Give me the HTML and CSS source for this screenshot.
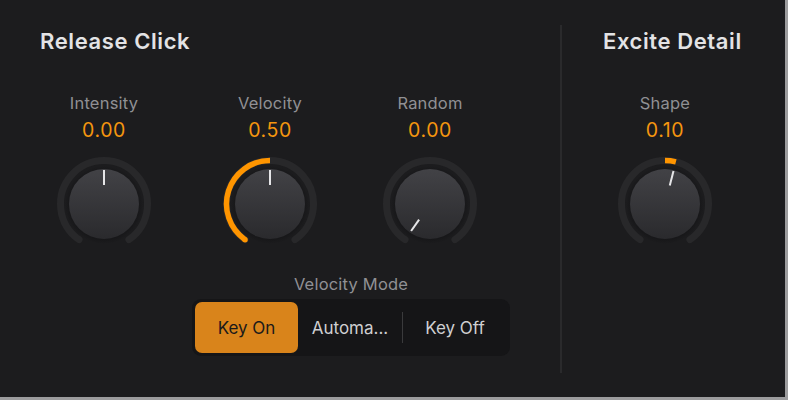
FILE: index.html
```html
<!DOCTYPE html>
<html>
<head>
<meta charset="utf-8">
<link rel="stylesheet" href="styles.css">
</head>
<body>
<div class="panel">
  <section class="group group-left">
    <h2 class="title">Release Click</h2>
    <div class="knobs">
      <div class="knob knob-first">
        <div class="knob-label">Intensity</div>
        <div class="knob-value">0.00</div>
        <svg class="dial" width="100" height="100" viewBox="0 0 100 100">
          <defs>
            <radialGradient id="sh1" cx="50%" cy="50%" r="50%">
              <stop offset="80%" stop-color="#141416"/>
              <stop offset="100%" stop-color="#1c1c1e"/>
            </radialGradient>
            <linearGradient id="disc1" x1="0" y1="0" x2="0" y2="1">
              <stop offset="0" stop-color="#424246"/>
              <stop offset="1" stop-color="#2a2a2d"/>
            </linearGradient>
          </defs>
          <path class="track" d="M25.05 85.63 A43.5 43.5 0 1 1 74.95 85.63"/>
          <circle cx="50" cy="51" r="39" fill="url(#sh1)"/>
          <circle cx="50" cy="50" r="35" fill="url(#disc1)"/>
          <line class="pointer" x1="50" y1="31" x2="50" y2="16"/>
        </svg>
      </div>
      <div class="knob">
        <div class="knob-label">Velocity</div>
        <div class="knob-value">0.50</div>
        <svg class="dial" width="100" height="100" viewBox="0 0 100 100">
          <defs>
            <radialGradient id="sh2" cx="50%" cy="50%" r="50%">
              <stop offset="80%" stop-color="#141416"/>
              <stop offset="100%" stop-color="#1c1c1e"/>
            </radialGradient>
            <linearGradient id="disc2" x1="0" y1="0" x2="0" y2="1">
              <stop offset="0" stop-color="#424246"/>
              <stop offset="1" stop-color="#2a2a2d"/>
            </linearGradient>
          </defs>
          <path class="track" d="M25.05 85.63 A43.5 43.5 0 1 1 74.95 85.63"/>
          <path class="arc" d="M25.05 85.63 A43.5 43.5 0 0 1 50 6.5"/>
          <circle cx="25.05" cy="85.63" r="2.75" class="arc-cap"/>
          <circle cx="50" cy="51" r="39" fill="url(#sh2)"/>
          <circle cx="50" cy="50" r="35" fill="url(#disc2)"/>
          <line class="pointer" x1="50" y1="31" x2="50" y2="16"/>
        </svg>
      </div>
      <div class="knob">
        <div class="knob-label">Random</div>
        <div class="knob-value">0.00</div>
        <svg class="dial" width="100" height="100" viewBox="0 0 100 100">
          <defs>
            <radialGradient id="sh3" cx="50%" cy="50%" r="50%">
              <stop offset="80%" stop-color="#141416"/>
              <stop offset="100%" stop-color="#1c1c1e"/>
            </radialGradient>
            <linearGradient id="disc3" x1="0" y1="0" x2="0" y2="1">
              <stop offset="0" stop-color="#424246"/>
              <stop offset="1" stop-color="#2a2a2d"/>
            </linearGradient>
          </defs>
          <path class="track" d="M25.05 85.63 A43.5 43.5 0 1 1 74.95 85.63"/>
          <circle cx="50" cy="51" r="39" fill="url(#sh3)"/>
          <circle cx="50" cy="50" r="35" fill="url(#disc3)"/>
          <line class="pointer" x1="39.1" y1="65.56" x2="31.1" y2="77.0"/>
        </svg>
      </div>
    </div>
    <div class="mode">
      <div class="mode-label">Velocity Mode</div>
      <div class="segmented">
        <div class="seg seg-active">Key On</div>
        <div class="seg">Automa...</div>
        <div class="seg-divider"></div>
        <div class="seg">Key Off</div>
      </div>
    </div>
  </section>
  <div class="divider"></div>
  <section class="group group-right">
    <h2 class="title">Excite Detail</h2>
    <div class="knobs knobs-right">
      <div class="knob">
        <div class="knob-label">Shape</div>
        <div class="knob-value">0.10</div>
        <svg class="dial" width="100" height="100" viewBox="0 0 100 100">
          <defs>
            <radialGradient id="sh4" cx="50%" cy="50%" r="50%">
              <stop offset="80%" stop-color="#141416"/>
              <stop offset="100%" stop-color="#1c1c1e"/>
            </radialGradient>
            <linearGradient id="disc4" x1="0" y1="0" x2="0" y2="1">
              <stop offset="0" stop-color="#424246"/>
              <stop offset="1" stop-color="#2a2a2d"/>
            </linearGradient>
          </defs>
          <path class="track" d="M25.05 85.63 A43.5 43.5 0 1 1 74.95 85.63"/>
          <path class="arc" d="M50 6.5 A43.5 43.5 0 0 1 60.89 7.89"/>
          <circle cx="50" cy="51" r="39" fill="url(#sh4)"/>
          <circle cx="50" cy="50" r="35" fill="url(#disc4)"/>
          <line class="pointer" x1="54.76" y1="31.6" x2="58.51" y2="17.08"/>
        </svg>
      </div>
    </div>
  </section>
</div>
</body>
</html>
```

FILE: styles.css
```css
* { box-sizing: border-box; }

html, body {
  margin: 0;
  padding: 0;
  background: #9c9c9e;
}

body {
  width: 788px;
  height: 400px;
  font-family: Inter, "Noto Sans", "Liberation Sans", sans-serif;
}

.panel {
  width: 785px;
  height: 397px;
  background: #1c1c1e;
  display: flex;
  flex-direction: row;
}

.group {
  display: flex;
  flex-direction: column;
  padding-top: 28px;
}

.group-left {
  width: 560px;
  padding-left: 40px;
}

.group-right {
  flex: 1;
  padding-left: 41px;
}

.title {
  margin: 0;
  height: 26px;
  line-height: 26px;
  font-size: 22px;
  font-weight: 600;
  color: #e3e3e5;
  letter-spacing: 0.6px;
}

.divider {
  width: 2px;
  margin: 25px 0 24px 0;
  background: #2a2a2c;
}

.knobs {
  display: flex;
  flex-direction: row;
  gap: 60px;
  margin-top: 39px;
  padding-left: 14px;
}

.knob-first {
  margin-right: 6px;
}

.knobs-right {
  padding-left: 12px;
}

.knob {
  width: 100px;
  display: flex;
  flex-direction: column;
  align-items: center;
}

.knob-label {
  height: 20px;
  line-height: 20px;
  font-size: 16.5px;
  color: #909094;
  letter-spacing: 0.2px;
}

.knob-value {
  margin-top: 6px;
  height: 22px;
  line-height: 22px;
  font-size: 19.5px;
  color: #f5960f;
  letter-spacing: 0.6px;
}

.dial {
  display: block;
  margin-top: 13px;
}

.track {
  fill: none;
  stroke: #28282a;
  stroke-width: 7;
  stroke-linecap: round;
}

.arc {
  fill: none;
  stroke: #ff9500;
  stroke-width: 5.5;
  stroke-linecap: butt;
}

.arc-cap {
  fill: #ff9500;
}

.pointer {
  stroke: #e6e6e8;
  stroke-width: 2;
  stroke-linecap: butt;
}

.mode {
  display: flex;
  flex-direction: column;
  align-items: center;
  width: 318px;
  margin-left: 152px;
  margin-top: 20px;
}

.mode-label {
  height: 20px;
  line-height: 20px;
  font-size: 16.5px;
  color: #909094;
  letter-spacing: 0.2px;
}

.segmented {
  margin-top: 5px;
  width: 318px;
  height: 57px;
  padding: 3px;
  border-radius: 9px;
  background: #151517;
  display: flex;
  flex-direction: row;
  align-items: center;
}

.seg {
  width: 104px;
  height: 51px;
  display: flex;
  align-items: center;
  justify-content: center;
  font-size: 17px;
  color: #cfcfd1;
}

.seg-active {
  width: 103px;
  border-radius: 7px;
  background: #d9841b;
  color: #1a1a1a;
}

.seg-divider {
  width: 1px;
  height: 31px;
  background: #3a3a3c;
}
```
